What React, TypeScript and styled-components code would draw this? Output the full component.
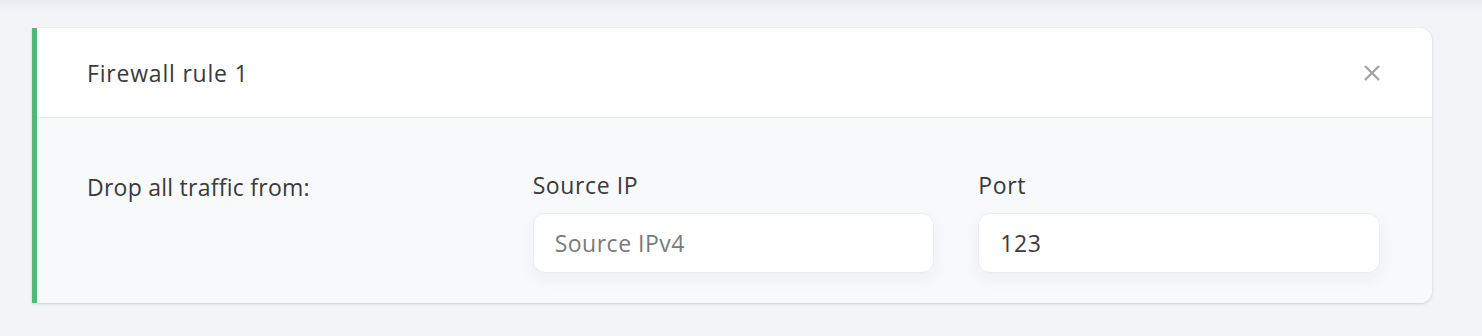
import React from 'react';
import styled, { createGlobalStyle } from 'styled-components';

const GlobalStyle = createGlobalStyle`
  html, body {
    margin: 0;
    padding: 0;
    background: #f3f4f8;
  }

  body {
    font-family: "Open Sans", Lato, sans-serif;
    color: #3b3b3d;
  }
`;

function CloseIcon() {
  return (
    <svg width="18" height="18" viewBox="0 0 18 18" fill="none">
      <path
        d="M2 2L16 16M16 2L2 16"
        stroke="currentColor"
        strokeWidth="2.3"
        strokeLinecap="butt"
      />
    </svg>
  );
}

function App() {
  return (
    <Page>
      <GlobalStyle />
      <Card>
        <CardHeader>
          <Title>Firewall rule 1</Title>
          <CloseButton aria-label="Remove rule">
            <CloseIcon />
          </CloseButton>
        </CardHeader>

        <CardBody>
          <Description>Drop all traffic from:</Description>

          <Field>
            <FieldLabel htmlFor="source-ip">Source IP</FieldLabel>
            <TextInput id="source-ip" placeholder="Source IPv4" />
          </Field>

          <Field>
            <FieldLabel htmlFor="port">Port</FieldLabel>
            <TextInput id="port" defaultValue="123" />
          </Field>
        </CardBody>
      </Card>
    </Page>
  );
}

export default App;

const Page = styled.div`
  min-height: 336px;
  box-sizing: border-box;
  padding: 28px 50px 0 32px;

  background: linear-gradient(
    to bottom,
    #e8e9ee 0px,
    #f0f1f5 6px,
    #f3f4f8 14px
  );
`;

const Card = styled.section`
  border-left: 5px solid #53b776;
  border-radius: 0 12px 12px 0;
  overflow: hidden;

  background: #ffffff;
  box-shadow: 0 1px 3px rgba(0, 0, 0, 0.16), 0 0 1px rgba(0, 0, 0, 0.06);
`;

const CardHeader = styled.header`
  display: flex;
  align-items: center;
  justify-content: space-between;

  height: 90px;
  padding: 0 51px 0 50px;
  box-sizing: border-box;

  border-bottom: 1px solid #e6e7eb;
`;

const Title = styled.h2`
  margin: 0;
  font-size: 23px;
  font-weight: 400;
  letter-spacing: 0.8px;
  color: #3a3a3c;
`;

const CloseButton = styled.button`
  display: flex;
  padding: 0;
  border: none;
  background: none;

  color: #a3a3a5;
  cursor: pointer;
`;

const CardBody = styled.div`
  display: grid;
  grid-template-columns: repeat(3, 1fr);
  column-gap: 44px;
  align-items: start;

  padding: 52px 52px 30px 50px;
  background: #f8f9fb;
`;

const Description = styled.p`
  margin: 0;
  padding-top: 2px;
  font-size: 23px;
  line-height: 30px;
  letter-spacing: 0.25px;
  color: #3a3a3c;
`;

const Field = styled.div`
  display: flex;
  flex-direction: column;
  gap: 13px;
`;

const FieldLabel = styled.label`
  font-size: 23px;
  line-height: 30px;
  letter-spacing: 0.6px;
  color: #3a3a3c;
`;

const TextInput = styled.input`
  box-sizing: border-box;
  width: 100%;
  height: 60px;
  padding: 0 21px;

  font-family: inherit;
  font-size: 23px;
  letter-spacing: 0.5px;
  color: #3a3a3c;

  background: #ffffff;
  border: 1px solid #ececef;
  border-radius: 12px;
  box-shadow: 0 6px 16px rgba(30, 40, 70, 0.05);

  &::placeholder {
    color: #7a7a7d;
  }

  &:focus {
    outline: none;
  }
`;
